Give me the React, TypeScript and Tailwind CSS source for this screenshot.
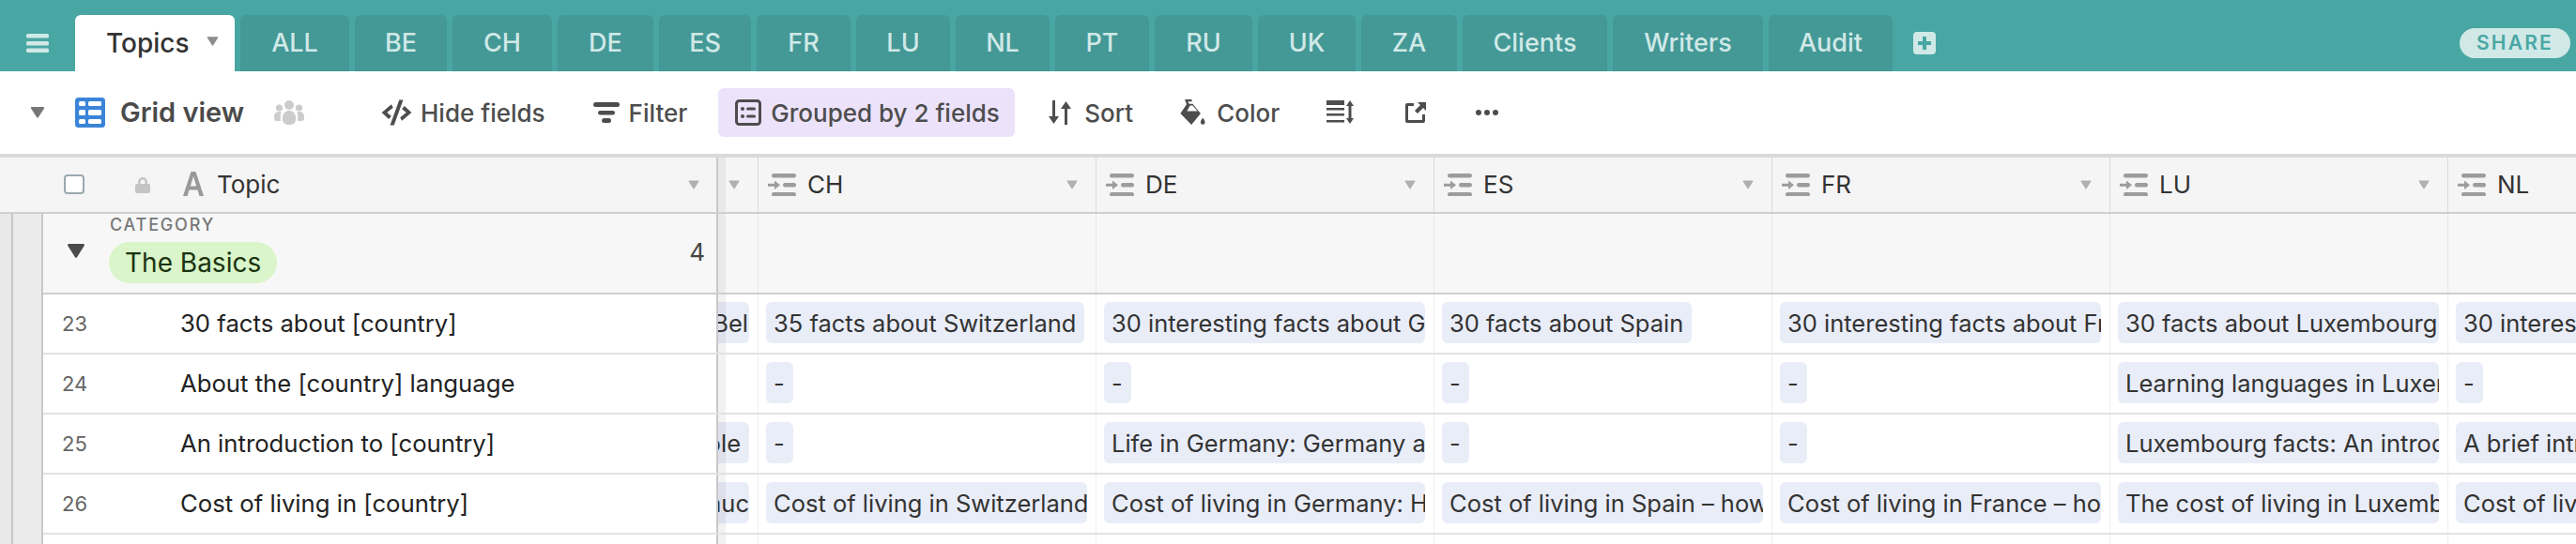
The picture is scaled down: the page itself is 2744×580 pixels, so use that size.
import React from "react";

const font = { fontFamily: "Inter, 'Liberation Sans', sans-serif" };

const tabs: [string, string][] = [
  ["ALL", "w-[116px]"],
  ["BE", "w-[98px]"],
  ["CH", "w-[106px]"],
  ["DE", "w-[102px]"],
  ["ES", "w-[98px]"],
  ["FR", "w-[100px]"],
  ["LU", "w-[100px]"],
  ["NL", "w-[100px]"],
  ["PT", "w-[100px]"],
  ["RU", "w-[104px]"],
  ["UK", "w-[104px]"],
  ["ZA", "w-[102px]"],
  ["Clients", "w-[154px]"],
  ["Writers", "w-[160px]"],
  ["Audit", "w-[132px]"],
];

const Caret = ({ cls }: { cls: string }) => (
  <svg viewBox="0 0 16 12" className={cls} fill="currentColor">
    <path d="M1 1.500C.6.8 1 0 1.800 0h12.400c.8 0 1.200.8.8 1.500L8.800 11.300c-.4.6-1.200.6-1.600 0z" />
  </svg>
);

const FieldIcon = () => (
  <svg viewBox="0 0 30 24" className="w-[30px] h-[24px] text-[#9c9c9c]" fill="currentColor">
    <rect x="4" y="0" width="26" height="4.400" rx="2.200" />
    <rect x="16" y="10" width="14" height="4.400" rx="2.200" />
    <rect x="4" y="20" width="26" height="4.400" rx="2.200" />
    <path d="M0 10.700h7V7.500l6 4.700-6 4.700v-3.200H0z" />
  </svg>
);

const Pill = ({ text }: { text: string }) => (
  <span className="block h-[44px] max-w-[342px] overflow-hidden whitespace-nowrap rounded-[6px] bg-[#e9edf8] pl-[8px] pr-[9px] text-[25.500px] leading-[46px] text-[#333]">
    {text}
  </span>
);

const cols = ["CH", "DE", "ES", "FR", "LU", "NL"];

const rows: { n: number; topic: string; partial: [string, string]; cells: string[] }[] = [
  {
    n: 23,
    topic: "30 facts about [country]",
    partial: ["Bel", "pr-[1px]"],
    cells: [
      "35 facts about Switzerland",
      "30 interesting facts about Germany",
      "30 facts about Spain",
      "30 interesting facts about France",
      "30 facts about Luxembourg",
      "30 interesting facts",
    ],
  },
  {
    n: 24,
    topic: "About the [country] language",
    partial: ["", ""],
    cells: ["-", "-", "-", "-", "Learning languages in Luxembourg", "-"],
  },
  {
    n: 25,
    topic: "An introduction to [country]",
    partial: ["ple", "pr-[9px]"],
    cells: ["-", "Life in Germany: Germany and its people", "-", "-", "Luxembourg facts: An introduction", "A brief introduction"],
  },
  {
    n: 26,
    topic: "Cost of living in [country]",
    partial: ["muc", "pr-[0px]"],
    cells: [
      "Cost of living in Switzerland",
      "Cost of living in Germany: How much",
      "Cost of living in Spain – how much",
      "Cost of living in France – how much",
      "The cost of living in Luxembourg",
      "Cost of living",
    ],
  },
];

const ToolBtn = ({ icon, label, cls = "" }: { icon: React.ReactNode; label: string; cls?: string }) => (
  <div className={`flex items-center ${cls}`}>
    {icon}
    <span className="text-[26px] font-medium text-[#4d4d4d] whitespace-nowrap">{label}</span>
  </div>
);

const Shade = () => <span className="absolute inset-y-0 left-0 w-[8px] bg-black/5" />;

export default function App() {
  return (
    <div className="w-[2744px] h-[580px] overflow-hidden bg-white flex flex-col" style={font}>
      {/* tab bar */}
      <div className="h-[76px] shrink-0 bg-[#49a7a3] flex items-end pl-[28px]">
        <svg viewBox="0 0 24 20" className="w-[24px] h-[20px] mb-[20px] mr-[28px] text-[#d0e9e7]" fill="currentColor">
          <rect x="0" y="0" width="24" height="4.400" rx="1.500" />
          <rect x="0" y="8" width="24" height="4.400" rx="1.500" />
          <rect x="0" y="15.600" width="24" height="4.400" rx="1.500" />
        </svg>
        <div className="w-[170px] h-[60px] bg-white rounded-t-[6px] flex items-center pl-[33px] mr-[6px]">
          <span className="text-[28px] font-medium text-[#333]">Topics</span>
          <Caret cls="w-[13px] h-[10px] ml-[18px] mb-[4px] text-[#8c8c8c]" />
        </div>
        <div className="flex gap-[6px]">
          {tabs.map(([t, w]) => (
            <div
              key={t}
              className={`${w} h-[60px] rounded-t-[6px] bg-[#449896] flex items-center justify-center text-[27px] font-medium text-[#d0e9e7]`}
            >
              {t}
            </div>
          ))}
        </div>
        <svg viewBox="0 0 24 24" className="w-[24px] h-[24px] ml-[22px] mb-[18px]">
          <rect width="24" height="24" rx="4" fill="#d0e9e7" />
          <path d="M10 5h4v5h5v4h-5v5h-4v-5H5v-4h5z" fill="#49a7a3" />
        </svg>
        <div className="ml-auto mr-[6px] mb-[14px] w-[118px] h-[32px] rounded-full bg-[#d0e9e7] flex items-center justify-center text-[21px] font-semibold tracking-[2.200px] text-[#49a7a3]">
          SHARE
        </div>
      </div>

      {/* toolbar */}
      <div className="h-[88px] shrink-0 bg-white flex items-center pl-[32px]">
        <Caret cls="w-[16px] h-[12px] text-[#777]" />
        <svg viewBox="0 0 32 32" className="w-[32px] h-[32px] ml-[32px]">
          <rect width="32" height="32" rx="3.500" fill="#3a85d8" />
          <g fill="#fff">
            <rect x="4" y="4" width="7" height="5" rx="1.500" />
            <rect x="14" y="4" width="14" height="5" rx="1.500" />
            <rect x="4" y="13" width="7" height="6" rx="1.500" />
            <rect x="14" y="13" width="14" height="6" rx="1.500" />
            <rect x="4" y="23" width="7" height="5" rx="1.500" />
            <rect x="14" y="23" width="14" height="5" rx="1.500" />
          </g>
        </svg>
        <span className="ml-[16px] w-[134px] text-[29px] font-semibold text-[#4a4a4a] whitespace-nowrap">Grid view</span>
        <svg viewBox="0 0 32 28" className="w-[32px] h-[28px] ml-[30px] text-[#ccc]" fill="currentColor">
          <circle cx="16" cy="6" r="5" />
          <circle cx="5.500" cy="9" r="3.600" />
          <circle cx="26.500" cy="9" r="3.600" />
          <path d="M9 20c0-5 3-8 7-8s7 3 7 8c0 5-2 7-7 7s-7-2-7-7z" />
          <path d="M0 19c0-4 2-6 5.500-6 1 0 1.600.2 2.200.5C6.600 15.500 6.500 18 7 23H3c-2 0-3-1-3-4z" />
          <path d="M32 19c0-4-2-6-5.500-6-1 0-1.600.2-2.200.5 1.100 2 1.200 4.500.7 9.500h4c2 0 3-1 3-4z" />
        </svg>
        <ToolBtn
          cls="ml-[81px]"
          label="Hide fields"
          icon={
            <svg viewBox="0 0 36 30" className="w-[35px] h-[28px] mr-[8px] text-[#4d4d4d]" fill="currentColor">
              <path d="M12 5.500 1 15l8 7.500 3-3.500-5-4 7-5.500z" />
              <path d="M24 24.500 35 15l-8-7.500-3 3.500 5 4-7 5.500z" />
              <path d="M21 0.500h4.500L15 29.500h-4.500z" />
            </svg>
          }
        />
        <ToolBtn
          cls="ml-[51px]"
          label="Filter"
          icon={
            <svg viewBox="0 0 28 22" className="w-[28px] h-[22px] mr-[10px] text-[#4d4d4d]" fill="currentColor">
              <rect x="0" y="0" width="28" height="5" rx="2.500" />
              <rect x="5" y="9" width="18" height="4.400" rx="2.200" />
              <rect x="9" y="17" width="10" height="5" rx="2.500" />
            </svg>
          }
        />
        <div className="ml-[33px] w-[316px] h-[52px] rounded-[6px] bg-[#ece3fb] flex items-center pl-[18px]">
          <svg viewBox="0 0 28 28" className="w-[28px] h-[28px] mr-[10px] text-[#4d4d4d]">
            <rect x="1.500" y="1.500" width="25" height="25" rx="3" fill="none" stroke="currentColor" strokeWidth="3" />
            <g fill="currentColor">
              <circle cx="8" cy="10" r="2" />
              <circle cx="8" cy="18" r="2" />
              <rect x="12" y="8.500" width="10" height="3" rx="1.500" />
              <rect x="12" y="16.500" width="10" height="3" rx="1.500" />
            </g>
          </svg>
          <span className="text-[26px] font-medium text-[#4d4d4d] whitespace-nowrap">Grouped by 2 fields</span>
        </div>
        <ToolBtn
          cls="ml-[36px]"
          label="Sort"
          icon={
            <svg viewBox="0 0 24 26" className="w-[24px] h-[26px] mr-[14px] text-[#4d4d4d]" fill="currentColor">
              <path d="M4 0h3v17h4l-5.500 8L0 17h4z" />
              <path d="M17 26h3V9h4l-5.500-8L13 9h4z" />
            </svg>
          }
        />
        <ToolBtn
          cls="ml-[49px]"
          label="Color"
          icon={
            <svg viewBox="0 0 30 30" className="w-[29px] h-[28px] mr-[11px] text-[#4d4d4d]" fill="currentColor">
              <path d="M6 0h8v2.500H9.500L11 5h4l9 11-10.500 13L1 16 8 5.500z" />
              <path d="M8.500 13.500h12l-5.500-6.500h-3z" fill="#fff" />
              <path d="M26.500 21c1.500 2.500 2.500 3.800 2.500 5.200a2.500 2.500 0 0 1-5 0c0-1.400 1-2.700 2.500-5.200z" />
            </svg>
          }
        />
        <svg viewBox="0 0 30 26" className="w-[30px] h-[26px] ml-[50px] text-[#4d4d4d]" fill="currentColor">
          <rect x="0" y="0" width="19" height="5" />
          <rect x="0" y="8" width="19" height="2.500" />
          <rect x="0" y="14" width="19" height="2.500" />
          <rect x="0" y="21" width="19" height="2.500" />
          <path d="M25 0l4 6h-2.500v13H29l-4 6-4-6h2.500V6H21z" />
        </svg>
        <svg viewBox="0 0 24 24" className="w-[24px] h-[24px] ml-[53px] text-[#4d4d4d]" fill="currentColor">
          <path d="M3 2h7v3H4v15h15v-6h3v7a2 2 0 0 1-2 2H3a2 2 0 0 1-2-2V4a2 2 0 0 1 2-2z" />
          <path d="M14 1h9v9l-3-3-6 6-3-3 6-6z" />
        </svg>
        <div className="ml-[52px] flex gap-[3px]">
          <span className="w-[6px] h-[6px] rounded-full bg-[#4d4d4d]" />
          <span className="w-[6px] h-[6px] rounded-full bg-[#4d4d4d]" />
          <span className="w-[6px] h-[6px] rounded-full bg-[#4d4d4d]" />
        </div>
      </div>

      {/* column header */}
      <div className="h-[64px] shrink-0 bg-[#f5f5f5] border-t-[4px] border-b-[2px] border-t-[#dadada] border-b-[#cfcfcf] flex">
        <div className="w-[765px] shrink-0 flex items-center pl-[68px] pr-[18px] border-r-[2px] border-r-[#c8c8c8]">
          <span className="w-[22px] h-[21px] mb-[2px] rounded-[4px] border-2 border-[#9aa8ae] bg-white" />
          <svg viewBox="0 0 16 17" className="w-[16px] h-[17px] ml-[54px] text-[#c4c4c4]" fill="currentColor">
            <path d="M8 0a5 5 0 0 1 5 5v2h1a2 2 0 0 1 2 2v6a2 2 0 0 1-2 2H2a2 2 0 0 1-2-2V9a2 2 0 0 1 2-2h1V5a5 5 0 0 1 5-5zm0 2.500A2.500 2.500 0 0 0 5.500 5v2h5V5A2.500 2.500 0 0 0 8 2.500z" />
          </svg>
          <svg viewBox="0 0 22 26" className="w-[22px] h-[26px] ml-[35px] mb-[2px] text-[#999]" fill="currentColor">
            <path d="M8.500 0h5L22 26h-4.500l-2-6.500h-9L4.500 26H0zm2.500 5-3.200 10.500h6.400z" />
          </svg>
          <span className="ml-[14px] mb-[2px] text-[26px] text-[#333]">Topic</span>
          <Caret cls="ml-auto w-[12px] h-[10px] text-[#b0b0b0]" />
        </div>
        <div className="relative w-[43px] shrink-0 flex items-center justify-end pr-[19px] border-r border-r-[#d5dbe0]">
          <Shade />
          <Caret cls="w-[12px] h-[10px] text-[#b0b0b0]" />
        </div>
        {cols.map((c) => (
          <div key={c} className="w-[360px] shrink-0 flex items-center pl-[10px] pr-[19px] border-r border-r-[#d5dbe0]">
            <FieldIcon />
            <span className="ml-[12px] mb-[2px] text-[26px] text-[#333]">{c}</span>
            <Caret cls="ml-auto w-[12px] h-[10px] text-[#b0b0b0]" />
          </div>
        ))}
      </div>

      {/* body */}
      <div className="flex-1 flex min-h-0">
        <div className="w-[14px] shrink-0 bg-[#e9e9e9] border-r-[2px] border-r-[#c8c8c8]" />
        <div className="w-[32px] shrink-0 bg-[#ebebeb] border-r-[2px] border-r-[#c8c8c8]" />
        <div className="flex-1 min-w-0 flex flex-col">
          {/* group header */}
          <div className="h-[86px] shrink-0 bg-[#f7f7f7] border-b-[2px] border-b-[#cfcfcf] flex">
            <div className="w-[719px] shrink-0 border-r-[2px] border-r-[#c8c8c8] flex items-start">
              <Caret cls="w-[20px] h-[15px] ml-[25px] mt-[32px] text-[#4a4a4a]" />
              <div className="ml-[25px] flex flex-col items-start">
                <span className="mt-[3px] ml-[1px] text-[18px] leading-[18px] font-medium tracking-[1.800px] text-[#777]">CATEGORY</span>
                <span className="mt-[9px] h-[44px] rounded-full bg-[#d9f5c9] px-[17px] text-[28px] leading-[44px] text-[#1c3310]">The Basics</span>
              </div>
              <span className="ml-auto mr-[12px] mt-[27px] text-[26px] leading-[28px] text-[#444]">4</span>
            </div>
            <div className="relative w-[43px] shrink-0 border-r border-r-[#e4e7ea]">
              <Shade />
            </div>
            {cols.map((c) => (
              <div key={c} className="w-[360px] shrink-0 border-r border-r-[#e4e7ea]" />
            ))}
          </div>
          {/* rows */}
          {rows.map((r) => (
            <div key={r.n} className="h-[64px] shrink-0 bg-white border-b-[2px] border-b-[#dfe2e6] flex">
              <div className="w-[719px] shrink-0 flex items-center border-r-[2px] border-r-[#c8c8c8]">
                <span className="ml-[20px] w-[126px] text-[22px] text-[#666]">{r.n}</span>
                <span className="text-[25.700px] text-[#222] whitespace-nowrap">{r.topic}</span>
              </div>
              <div className="relative w-[43px] shrink-0 flex items-center pb-[2px] border-r border-r-[#efefef] pr-[9px]">
                {r.partial[0] && (
                  <span
                    className={`w-full h-[44px] overflow-hidden rounded-r-[6px] bg-[#e9edf8] flex justify-end whitespace-nowrap text-[25.500px] leading-[46px] text-[#333] ${r.partial[1]}`}
                  >
                    {r.partial[0]}
                  </span>
                )}
                <Shade />
              </div>
              {r.cells.map((t, i) => (
                <div key={i} className="w-[360px] shrink-0 min-w-0 flex items-center pb-[2px] pl-[8px] border-r border-r-[#efefef]">
                  <Pill text={t} />
                </div>
              ))}
            </div>
          ))}
          <div className="flex-1 bg-white flex">
            <div className="w-[719px] shrink-0 border-r-[2px] border-r-[#c8c8c8]" />
            <div className="relative w-[43px] shrink-0 border-r border-r-[#efefef]">
              <Shade />
            </div>
            {cols.map((c) => (
              <div key={c} className="w-[360px] shrink-0 border-r border-r-[#efefef]" />
            ))}
          </div>
        </div>
      </div>
    </div>
  );
}
